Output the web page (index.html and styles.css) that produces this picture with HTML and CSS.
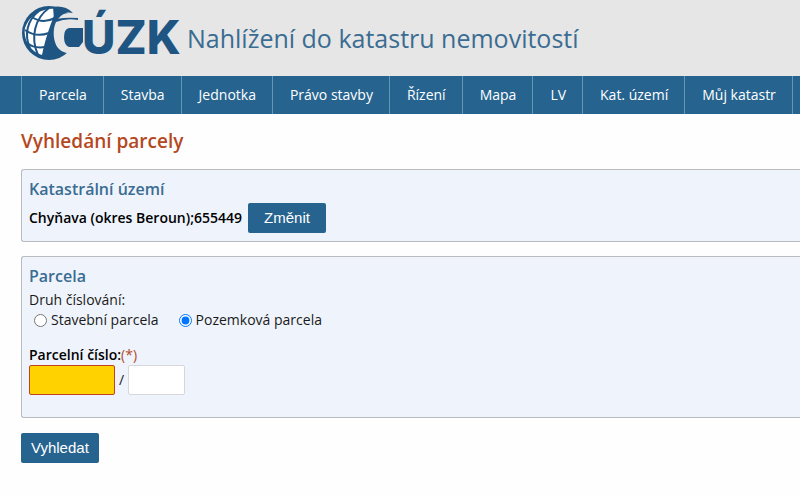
FILE: index.html
```html
<!DOCTYPE html>
<html lang="cs">
<head>
<meta charset="UTF-8">
<meta name="viewport" content="width=device-width, initial-scale=1.0">
<title>Nahlížení do katastru nemovitostí</title>
<link rel="stylesheet" href="styles.css">
</head>
<body>
<header class="header">
<a href="#" class="logo">
<svg width="162" height="76" viewBox="0 0 162 76" role="img" aria-label="ČÚZK">
<!-- globe -->
<circle cx="29" cy="33" r="27" fill="#1f5583"/>
<path d="M37 9C23 7 9 15 5 28C3 40 11 52 22 55C25 40 31 22 37 9Z" fill="#fff"/>
<g fill="none" stroke="#1f5583" stroke-width="2">
<path d="M29 8C15 18 10 37 18 55"/>
<path d="M19 11C7 20 4 35 10 48"/>
<path d="M12 17C19 22 27 22 35 18"/>
<path d="M5 30C12 35 21 36 29 33"/>
<path d="M7 43C12 47 19 48 25 47"/>
</g>
<!-- letter ring cut out of the globe -->
<path d="M62 14H53C46 12 42 14 39 18C32 24 32 42 39 49C42 52 46 53 51 54H62Z" fill="#e6e6e6"/>
<path d="M33 7Q45 5 53 13Q45 11 39 16L34 20Z" fill="#1f5583"/>
<path d="M36 19Q47 17 58 18V20Q46 18 36 22Z" fill="#1f5583"/>
<path d="M63 28H49Q44 29 44 37Q44 45 49 47H59L63 42Z" fill="#1f5583"/>
<text x="62" y="54" class="logo-text">ÚZK</text>
</svg>
</a>
<span class="app-name">Nahlížení do katastru nemovitostí</span>
</header>

<nav class="menu">
<a href="#">Parcela</a>
<a href="#">Stavba</a>
<a href="#">Jednotka</a>
<a href="#">Právo stavby</a>
<a href="#">Řízení</a>
<a href="#">Mapa</a>
<a href="#">LV</a>
<a href="#">Kat. území</a>
<a href="#">Můj katastr</a>
</nav>

<main class="content">
<h1>Vyhledání parcely</h1>
<form>
<section class="panel">
<h2>Katastrální území</h2>
<div class="area-row">
<strong>Chyňava (okres Beroun);655449</strong>
<button type="button" class="btn btn-change">Změnit</button>
</div>
</section>

<section class="panel panel-parcel">
<h2>Parcela</h2>
<div class="row">Druh číslování:</div>
<div class="radios">
<label><input type="radio" name="druh" value="stavebni">Stavební parcela</label>
<label><input type="radio" name="druh" value="pozemkova" checked>Pozemková parcela</label>
</div>
<div class="row"><label for="cislo"><strong>Parcelní číslo:</strong><span class="required">(*)</span></label></div>
<div class="number-row">
<input type="text" id="cislo" class="number-main">
<span>/</span>
<input type="text" class="number-sub" aria-label="Poddělení čísla">
</div>
</section>

<button type="submit" class="btn">Vyhledat</button>
</form>
</main>
</body>
</html>
```
FILE: styles.css
```css
body {
  margin: 0;
  background-color: #fefefe;
  color: #1a1a1a;
  font-family: "Open Sans", "Noto Sans", sans-serif;
  font-size: 14px;
  line-height: 20px;
}

.header {
  display: flex;
  align-items: center;
  gap: 5px;
  height: 76px;
  padding-left: 20px;
  background-color: #e6e6e6;
}

.logo {
  display: flex;
}

.logo-text {
  font-family: Inter, sans-serif;
  font-size: 46px;
  font-weight: 800;
  fill: #1f5583;
}

.app-name {
  color: #3b6c92;
  font-family: "Open Sans", "Noto Sans", sans-serif;
  font-size: 25px;
  white-space: nowrap;
}

.menu {
  display: flex;
  padding-left: 21px;
  background-color: #26648f;
}

.menu a {
  padding: 9px 16px 9px 17px;
  border-left: 1px solid #6496b6;
  color: #fff;
  line-height: 20px;
  text-decoration: none;
  white-space: nowrap;
}

.menu a:last-child {
  border-right: 1px solid #6496b6;
}

.menu a:hover {
  background-color: #1f5583;
}

.content {
  padding: 13px 0 0 21px;
}

h1 {
  margin: 0 0 14px;
  color: #b5481f;
  font-size: 19px;
  font-weight: 600;
  line-height: 28px;
}

h2 {
  margin: 0 0 3px;
  color: #3b6c92;
  font-size: 16px;
  font-weight: 600;
  line-height: 22px;
}

strong {
  color: #000;
  font-weight: 600;
}

.panel {
  margin-bottom: 14px;
  padding: 8px 7px;
  border: 1px solid #b9bbbf;
  border-right: none;
  border-radius: 3px 0 0 3px;
  background-color: #eff4fc;
}

.panel-parcel {
  margin-bottom: 15px;
  padding-bottom: 22px;
}

.area-row {
  display: flex;
  align-items: center;
  gap: 6px;
}

.btn {
  height: 30px;
  padding: 0 10px 2px;
  border: none;
  border-radius: 2px;
  background-color: #26648f;
  color: #fff;
  font-family: "Liberation Sans", Arial, sans-serif;
  font-size: 15px;
  cursor: pointer;
}

.btn-change {
  padding: 0 16px 2px;
}

.radios {
  display: flex;
  gap: 20px;
  margin-bottom: 15px;
  padding-left: 5px;
}

.radios label {
  display: flex;
  align-items: center;
  gap: 4px;
}

.radios input {
  width: 13px;
  height: 13px;
  margin: 0;
}

.required {
  color: #b5481f;
}

.number-row {
  display: flex;
  align-items: center;
  gap: 4px;
}

.number-row input {
  box-sizing: border-box;
  height: 30px;
  border: 1px solid #d5d7da;
  border-radius: 2px;
  background-color: #fff;
}

.number-row .number-main {
  width: 86px;
  border-color: #c0441c;
  background-color: #ffd200;
}

.number-row .number-sub {
  width: 57px;
}
```
